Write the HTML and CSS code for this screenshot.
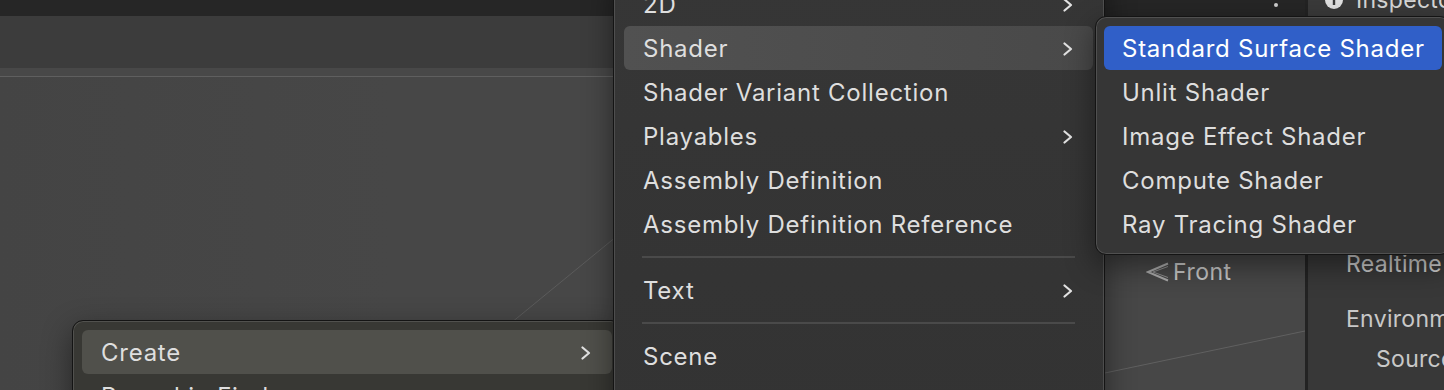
FILE: index.html
```html
<!DOCTYPE html>
<html lang="en">
<head>
<meta charset="utf-8">
<title>Unity Create menu</title>
<link rel="stylesheet" href="styles.css">
</head>
<body>
<div class="editor">
  <section class="scene-pane">
    <div class="tabbar"><span class="kebab-dot"></span></div>
    <div class="toolbar"></div>
    <div class="subbar"></div>
    <div class="viewport">
      <svg class="grid-lines" width="1305" height="313" viewBox="0 0 1305 313">
        <line x1="400" y1="337" x2="700" y2="91" stroke="#5b5b5b" stroke-width="1"/>
        <line x1="1000" y1="318" x2="1305" y2="254" stroke="#606060" stroke-width="1"/>
      </svg>
      <div class="gizmo">
        <svg class="gizmo-arrow" width="24" height="20" viewBox="0 0 24 20"><path d="M22 1.5 L2 10 L22 18.5" fill="none" stroke="#a9a9a9" stroke-width="2" stroke-linejoin="miter"/><path d="M22 4.5 L7 10 L22 15.5" fill="none" stroke="#8c8c8c" stroke-width="1"/></svg>
        <span>Front</span>
      </div>
    </div>
  </section>
  <div class="divider"></div>
  <section class="inspector">
    <div class="insp-tabbar">
      <div class="insp-tab">
        <svg class="info-icon" width="18" height="18" viewBox="0 0 18 18"><circle cx="9" cy="9" r="9" fill="#e2e2e2"/><rect x="7.8" y="7.5" width="2.4" height="6.5" fill="#3a3a3a"/><circle cx="9" cy="5" r="1.4" fill="#3a3a3a"/></svg>
        <span>Inspector</span>
      </div>
    </div>
    <div class="insp-body">
      <div class="insp-heading">Realtime Lighting</div>
      <div class="insp-heading insp-gap">Environment</div>
      <div class="insp-row">Source</div>
      <div class="insp-row">Intensity Multiplier</div>
    </div>
  </section>
</div>

<div class="menu ctx-menu">
  <div class="menu-item is-hover ctx-hover"><span>Create</span><svg class="chev" width="12" height="14" viewBox="0 0 12 14"><path d="M2.5 1.5 L9 7 L2.5 12.5" fill="none" stroke="#e2e2e2" stroke-width="2.2" stroke-linecap="round" stroke-linejoin="round"/></svg></div>
  <div class="menu-item"><span>Reveal in Finder</span></div>
</div>

<div class="menu submenu">
  <div class="menu-item"><span>2D</span><svg class="chev" width="12" height="14" viewBox="0 0 12 14"><path d="M2.5 1.5 L9 7 L2.5 12.5" fill="none" stroke="#e2e2e2" stroke-width="2.2" stroke-linecap="round" stroke-linejoin="round"/></svg></div>
  <div class="menu-item is-hover"><span>Shader</span><svg class="chev" width="12" height="14" viewBox="0 0 12 14"><path d="M2.5 1.5 L9 7 L2.5 12.5" fill="none" stroke="#e2e2e2" stroke-width="2.2" stroke-linecap="round" stroke-linejoin="round"/></svg></div>
  <div class="menu-item"><span>Shader Variant Collection</span></div>
  <div class="menu-item"><span>Playables</span><svg class="chev" width="12" height="14" viewBox="0 0 12 14"><path d="M2.5 1.5 L9 7 L2.5 12.5" fill="none" stroke="#e2e2e2" stroke-width="2.2" stroke-linecap="round" stroke-linejoin="round"/></svg></div>
  <div class="menu-item"><span>Assembly Definition</span></div>
  <div class="menu-item"><span>Assembly Definition Reference</span></div>
  <div class="menu-sep"></div>
  <div class="menu-item"><span>Text</span><svg class="chev" width="12" height="14" viewBox="0 0 12 14"><path d="M2.5 1.5 L9 7 L2.5 12.5" fill="none" stroke="#e2e2e2" stroke-width="2.2" stroke-linecap="round" stroke-linejoin="round"/></svg></div>
  <div class="menu-sep"></div>
  <div class="menu-item"><span>Scene</span></div>
  <div class="menu-item"><span>Prefab Variant</span></div>
</div>

<div class="menu shader-menu">
  <div class="menu-item is-selected"><span>Standard Surface Shader</span></div>
  <div class="menu-item"><span>Unlit Shader</span></div>
  <div class="menu-item"><span>Image Effect Shader</span></div>
  <div class="menu-item"><span>Compute Shader</span></div>
  <div class="menu-item"><span>Ray Tracing Shader</span></div>
</div>
</body>
</html>
```

FILE: styles.css
```css
* {
  box-sizing: border-box;
  margin: 0;
  padding: 0;
}

html,
body {
  width: 1444px;
  height: 390px;
  overflow: hidden;
  background: #383838;
}

body {
  position: relative;
  font-family: "Inter", "Liberation Sans", sans-serif;
  letter-spacing: 0.75px;
  -webkit-font-smoothing: antialiased;
}

.editor {
  display: grid;
  grid-template-columns: 1305px 3px 1fr;
  height: 390px;
}

/* scene pane */
.scene-pane {
  display: flex;
  flex-direction: column;
  min-width: 0;
}

.tabbar {
  height: 16px;
  background: #262626;
  display: flex;
  justify-content: flex-end;
  align-items: flex-start;
  padding-right: 27px;
}

.kebab-dot {
  width: 4px;
  height: 4px;
  margin-top: 3px;
  border-radius: 50%;
  background: #cfcfcf;
}

.toolbar {
  height: 52px;
  background: #3c3c3c;
}

.subbar {
  height: 9px;
  background: #484848;
  border-bottom: 1px solid #5f5f5f;
}

.viewport {
  flex: 1;
  position: relative;
  overflow: hidden;
  background: linear-gradient(90deg, #444444 0%, #474747 30%, #474747 100%);
}

.grid-lines {
  position: absolute;
  left: 0;
  top: 0;
}

.gizmo {
  position: absolute;
  left: 1146px;
  top: 182px;
  display: flex;
  align-items: center;
  gap: 3px;
  color: #c6c6c6;
  font-size: 23px;
  letter-spacing: 0.5px;
  line-height: 26px;
}

.divider {
  background: #232323;
}

/* inspector */
.inspector {
  display: flex;
  flex-direction: column;
  background: #383838;
  min-width: 0;
}

.insp-tabbar {
  height: 16px;
  background: #3a3a3a;
  overflow: hidden;
  display: flex;
  padding-left: 17px;
}

.insp-tab {
  display: flex;
  align-items: center;
  gap: 13px;
  height: 18px;
  margin-top: -9px;
  color: #d8d8d8;
  font-size: 23px;
  letter-spacing: 0.3px;
  white-space: nowrap;
}

.insp-body {
  padding: 228px 0 0 38px;
  color: #c8c8c8;
  font-size: 23px;
  letter-spacing: 0.3px;
  line-height: 40px;
  white-space: nowrap;
}

.insp-gap {
  margin-top: 15px;
}

.insp-row {
  padding-left: 30px;
}

/* menus */
.menu {
  position: absolute;
  border: 1px solid #141414;
  border-radius: 11px;
  box-shadow: inset 0 0 0 1px rgba(255, 255, 255, 0.13), 0 10px 30px rgba(0, 0, 0, 0.45);
  color: #dedede;
  font-size: 24px;
}

.menu-item {
  height: 44px;
  display: flex;
  align-items: center;
  justify-content: space-between;
  padding: 1px 19px 0;
  border-radius: 6px;
  white-space: nowrap;
}

.menu-item.is-hover {
  background: linear-gradient(90deg, #515151, #494949);
}

.menu-item.is-selected {
  background: #305fc8;
  color: #ffffff;
}

.menu-sep {
  height: 22px;
  display: flex;
  align-items: center;
  padding: 0 18px;
}

.menu-sep::before {
  content: "";
  flex: 1;
  height: 2px;
  background: #4a4a4a;
}

.chev {
  flex: none;
}

.ctx-menu {
  left: 72px;
  top: 320px;
  width: 550px;
  padding: 9px;
  background: #383834;
  z-index: 1;
}

.ctx-menu .menu-item {
  padding-left: 19px;
  padding-right: 20px;
}

.ctx-hover.is-hover {
  background: #50504b;
}

.submenu {
  left: 613px;
  top: -29px;
  width: 492px;
  padding: 10px 11px 10px 10px;
  background: linear-gradient(180deg, #363636, #333333);
  z-index: 2;
}

.shader-menu {
  left: 1095px;
  top: 16px;
  width: 356px;
  padding: 9px 8px 8px 8px;
  background: #363636;
  z-index: 3;
}

.shader-menu .menu-item {
  padding-left: 18px;
}
```
